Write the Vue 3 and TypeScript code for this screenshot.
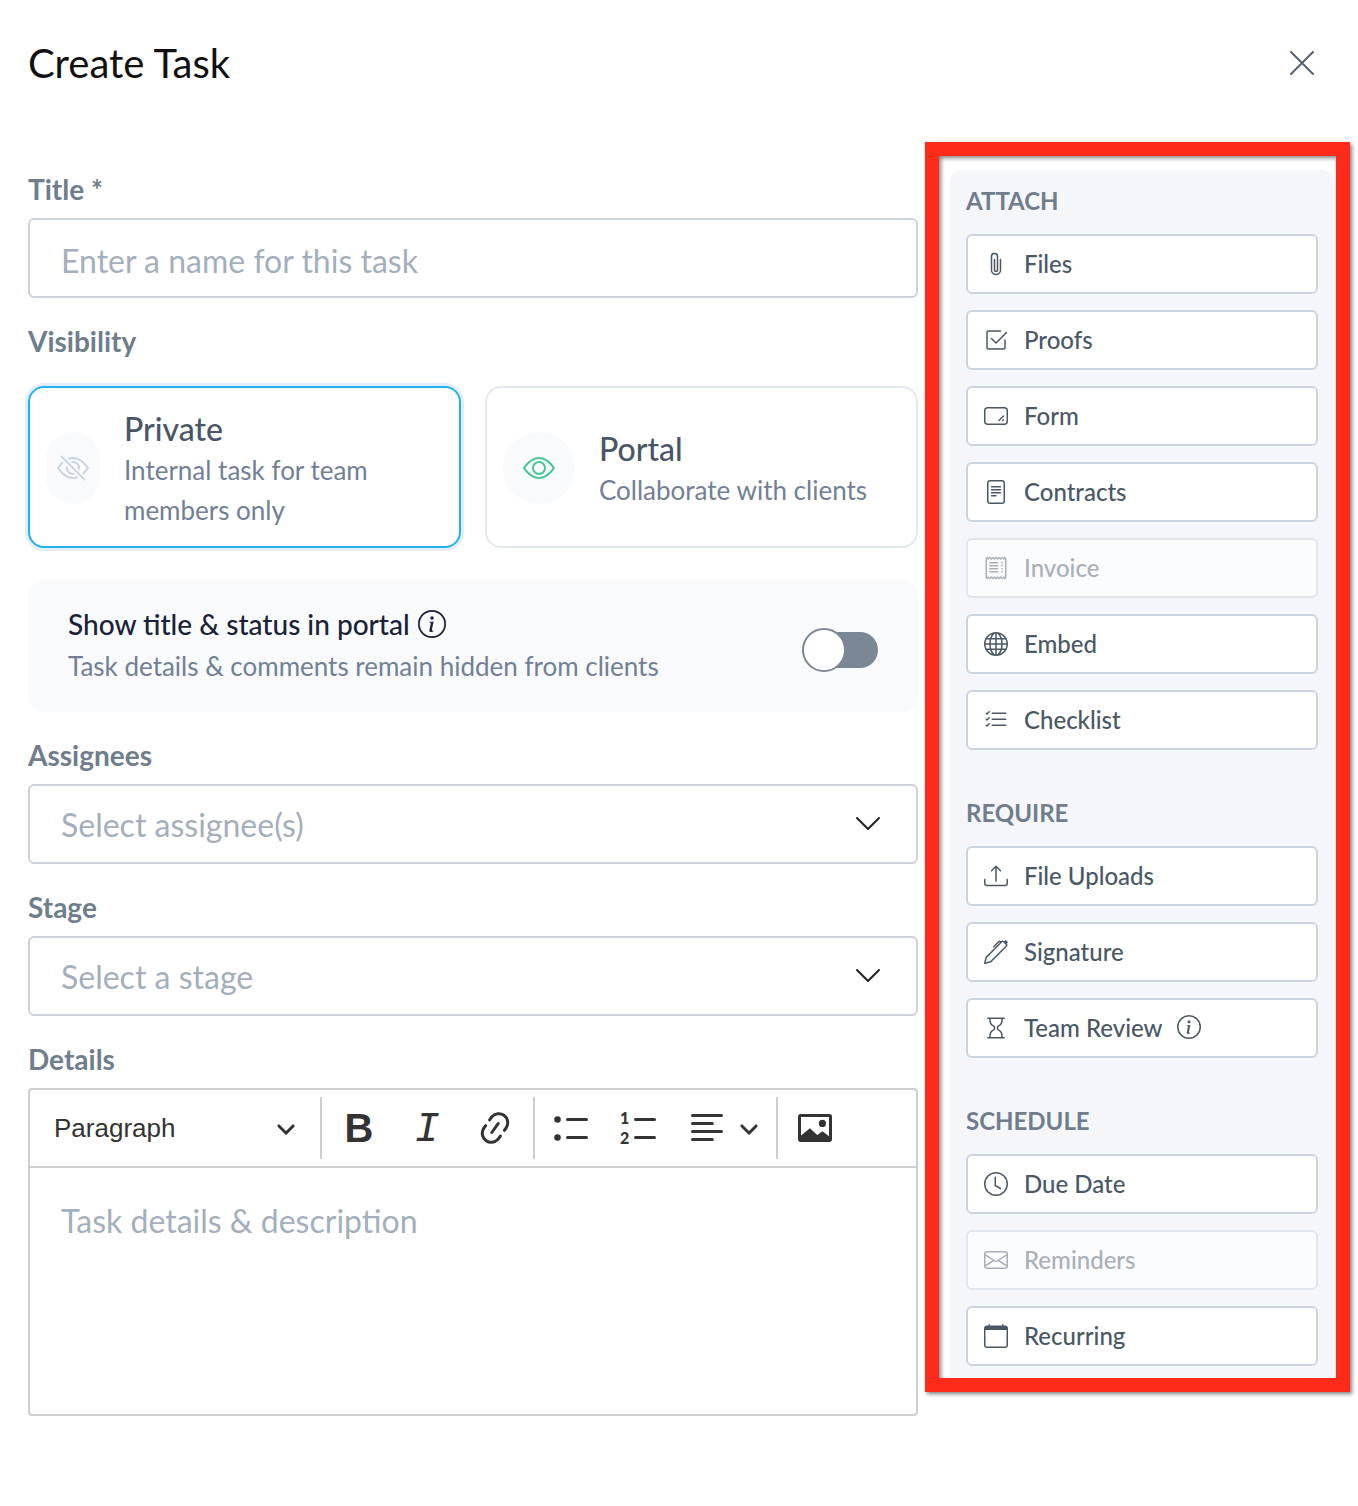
<script setup lang="ts">
import { ref } from 'vue'

interface Action {
  label: string
  icon: string
  disabled?: boolean
  info?: boolean
}

interface ActionGroup {
  heading: string
  actions: Action[]
}

const title = ref('')
const visibility = ref('private')
const showInPortal = ref(false)
const assignee = ref('')
const stage = ref('')
const blockStyle = ref('paragraph')
const details = ref('')

const circle = 'M8 15A7 7 0 1 1 8 1a7 7 0 0 1 0 14m0 1A8 8 0 1 0 8 0a8 8 0 0 0 0 16'

const icons: Record<string, string> = {
  paperclip:
    'M4.5 3a2.5 2.5 0 0 1 5 0v9a1.5 1.5 0 0 1-3 0V5a.5.5 0 0 1 1 0v7a.5.5 0 0 0 1 0V3a1.5 1.5 0 1 0-3 0v9a2.5 2.5 0 0 0 5 0V5a.5.5 0 0 1 1 0v7a3.5 3.5 0 1 1-7 0z',
  check:
    'M3 14.5A1.5 1.5 0 0 1 1.5 13V3A1.5 1.5 0 0 1 3 1.5h8a.5.5 0 0 1 0 1H3a.5.5 0 0 0-.5.5v10a.5.5 0 0 0 .5.5h10a.5.5 0 0 0 .5-.5V8a.5.5 0 0 1 1 0v5a1.5 1.5 0 0 1-1.5 1.5z M8.354 10.354l7-7a.5.5 0 0 0-.708-.708L8 9.293 5.354 6.646a.5.5 0 1 0-.708.708l3 3a.5.5 0 0 0 .708 0',
  form:
    'M0 4.5A2.5 2.5 0 0 1 2.5 2h11A2.5 2.5 0 0 1 16 4.5v7a2.5 2.5 0 0 1-2.5 2.5h-11A2.5 2.5 0 0 1 0 11.5zM2.5 3A1.5 1.5 0 0 0 1 4.5v7A1.5 1.5 0 0 0 2.5 13h11a1.5 1.5 0 0 0 1.5-1.5v-7A1.5 1.5 0 0 0 13.5 3zm10.854 4.646a.5.5 0 0 1 0 .708l-3 3a.5.5 0 0 1-.708-.708l3-3a.5.5 0 0 1 .708 0m0 2.5a.5.5 0 0 1 0 .708l-.5.5a.5.5 0 0 1-.708-.708l.5-.5a.5.5 0 0 1 .708 0',
  file:
    'M5 4a.5.5 0 0 0 0 1h6a.5.5 0 0 0 0-1zm-.5 2.5A.5.5 0 0 1 5 6h6a.5.5 0 0 1 0 1H5a.5.5 0 0 1-.5-.5M5 8a.5.5 0 0 0 0 1h6a.5.5 0 0 0 0-1zm0 2a.5.5 0 0 0 0 1h3a.5.5 0 0 0 0-1z M2 2a2 2 0 0 1 2-2h8a2 2 0 0 1 2 2v12a2 2 0 0 1-2 2H4a2 2 0 0 1-2-2zm10-1H4a1 1 0 0 0-1 1v12a1 1 0 0 0 1 1h8a1 1 0 0 0 1-1V2a1 1 0 0 0-1-1',
  receipt:
    'M1.92.506a.5.5 0 0 1 .434.14L3 1.293l.646-.647a.5.5 0 0 1 .708 0L5 1.293l.646-.647a.5.5 0 0 1 .708 0L7 1.293l.646-.647a.5.5 0 0 1 .708 0L9 1.293l.646-.647a.5.5 0 0 1 .708 0l.646.647.646-.647a.5.5 0 0 1 .708 0l.646.647.646-.647a.5.5 0 0 1 .801.13l.5 1A.5.5 0 0 1 15 2v12a.5.5 0 0 1-.053.224l-.5 1a.5.5 0 0 1-.8.13L13 14.707l-.646.647a.5.5 0 0 1-.708 0L11 14.707l-.646.647a.5.5 0 0 1-.708 0L9 14.707l-.646.647a.5.5 0 0 1-.708 0L7 14.707l-.646.647a.5.5 0 0 1-.708 0L5 14.707l-.646.647a.5.5 0 0 1-.708 0L3 14.707l-.646.647a.5.5 0 0 1-.801-.13l-.5-1A.5.5 0 0 1 1 14V2a.5.5 0 0 1 .053-.224l.5-1a.5.5 0 0 1 .367-.27m.217 1.338L2 2.118v11.764l.137.274.51-.51a.5.5 0 0 1 .707 0l.646.647.646-.646a.5.5 0 0 1 .708 0l.646.646.646-.646a.5.5 0 0 1 .708 0l.646.646.646-.646a.5.5 0 0 1 .708 0l.646.646.646-.646a.5.5 0 0 1 .708 0l.646.646.646-.646a.5.5 0 0 1 .708 0l.509.509.137-.274V2.118l-.137-.274-.51.51a.5.5 0 0 1-.707 0L12 1.707l-.646.647a.5.5 0 0 1-.708 0L10 1.707l-.646.647a.5.5 0 0 1-.708 0L8 1.707l-.646.647a.5.5 0 0 1-.708 0L6 1.707l-.646.647a.5.5 0 0 1-.708 0L4 1.707l-.646.647a.5.5 0 0 1-.708 0z M3.5 4h6v1h-6z M3.5 6h6v1h-6z M3.5 8h6v1h-6z M3.5 10h6v1h-6z M11.5 4h1v1h-1z M11.5 6h1v1h-1z M11.5 8h1v1h-1z M11.5 10h1v1h-1z',
  globe:
    'M0 8a8 8 0 1 1 16 0A8 8 0 0 1 0 8m7.5-6.923c-.67.204-1.335.82-1.887 1.855A8 8 0 0 0 5.145 4H7.5zM4.09 4a9.3 9.3 0 0 1 .64-1.539 7 7 0 0 1 .597-.933A7.03 7.03 0 0 0 2.255 4zm-.582 3.5c.03-.877.138-1.718.312-2.5H1.674a7 7 0 0 0-.656 2.5zM4.847 5a12.5 12.5 0 0 0-.338 2.5H7.5V5zM8.5 5v2.5h2.99a12.5 12.5 0 0 0-.337-2.5zM4.51 8.5a12.5 12.5 0 0 0 .337 2.5H7.5V8.5zm3.99 0V11h2.653c.187-.765.306-1.608.338-2.5zM5.145 12q.208.58.468 1.068c.552 1.035 1.218 1.65 1.887 1.855V12zm.182 2.472a7 7 0 0 1-.597-.933A9.3 9.3 0 0 1 4.09 12H2.255a7 7 0 0 0 3.072 2.472M3.82 11a13.7 13.7 0 0 1-.312-2.5h-2.49c.062.89.291 1.733.656 2.5zm6.853 3.472A7 7 0 0 0 13.745 12H11.91a9.3 9.3 0 0 1-.64 1.539 7 7 0 0 1-.597.933M8.5 12v2.923c.67-.204 1.335-.82 1.887-1.855q.26-.487.468-1.068zm3.68-1h2.146c.365-.767.594-1.61.656-2.5h-2.49a13.7 13.7 0 0 1-.312 2.5m2.802-3.5a7 7 0 0 0-.656-2.5H12.18c.174.782.282 1.623.312 2.5zM11.27 2.461c.247.464.462.98.64 1.539h1.835a7 7 0 0 0-3.072-2.472c.218.284.418.598.597.933M10.855 4a8 8 0 0 0-.468-1.068C9.835 1.897 9.17 1.282 8.5 1.077V4z',
  list:
    'M5 11.5a.5.5 0 0 1 .5-.5h9a.5.5 0 0 1 0 1h-9a.5.5 0 0 1-.5-.5m0-4a.5.5 0 0 1 .5-.5h9a.5.5 0 0 1 0 1h-9a.5.5 0 0 1-.5-.5m0-4a.5.5 0 0 1 .5-.5h9a.5.5 0 0 1 0 1h-9a.5.5 0 0 1-.5-.5M3.854 2.146a.5.5 0 0 1 0 .708l-1.5 1.5a.5.5 0 0 1-.708 0l-.5-.5a.5.5 0 1 1 .708-.708L2 3.293l1.146-1.147a.5.5 0 0 1 .708 0m0 4a.5.5 0 0 1 0 .708l-1.5 1.5a.5.5 0 0 1-.708 0l-.5-.5a.5.5 0 1 1 .708-.708L2 7.293l1.146-1.147a.5.5 0 0 1 .708 0m0 4a.5.5 0 0 1 0 .708l-1.5 1.5a.5.5 0 0 1-.708 0l-.5-.5a.5.5 0 0 1 .708-.708l.146.147 1.146-1.147a.5.5 0 0 1 .708 0',
  upload:
    'M.5 9.9a.5.5 0 0 1 .5.5v2.5a1 1 0 0 0 1 1h12a1 1 0 0 0 1-1v-2.5a.5.5 0 0 1 1 0v2.5a2 2 0 0 1-2 2H2a2 2 0 0 1-2-2v-2.5a.5.5 0 0 1 .5-.5 M7.646 1.146a.5.5 0 0 1 .708 0l3 3a.5.5 0 0 1-.708.708L8.5 2.707V11.5a.5.5 0 0 1-1 0V2.707L5.354 4.854a.5.5 0 1 1-.708-.708z',
  pen:
    'M13.498.795l.149-.149a1.207 1.207 0 1 1 1.707 1.708l-.149.148a1.5 1.5 0 0 1-.059 2.059L4.854 14.854a.5.5 0 0 1-.233.131l-4 1a.5.5 0 0 1-.606-.606l1-4a.5.5 0 0 1 .131-.232l9.642-9.642a.5.5 0 0 0-.642.056L6.854 4.854a.5.5 0 1 1-.708-.708L9.44.854A1.5 1.5 0 0 1 11.5.796a1.5 1.5 0 0 1 1.998-.001m-.644.766a.5.5 0 0 0-.707 0L1.95 11.756l-.764 3.057 3.057-.764L14.44 3.854a.5.5 0 0 0 0-.708z',
  hourglass:
    'M2 1.5a.5.5 0 0 1 .5-.5h11a.5.5 0 0 1 0 1h-1v1a4.5 4.5 0 0 1-2.557 4.06c-.29.139-.443.377-.443.59v.7c0 .213.154.451.443.59A4.5 4.5 0 0 1 12.5 13v1h1a.5.5 0 0 1 0 1h-11a.5.5 0 1 1 0-1h1v-1a4.5 4.5 0 0 1 2.557-4.06c.29-.139.443-.377.443-.59v-.7c0-.213-.154-.451-.443-.59A4.5 4.5 0 0 1 3.5 3V2h-1a.5.5 0 0 1-.5-.5m2.5.5v1a3.5 3.5 0 0 0 1.989 3.158c.533.256 1.011.791 1.011 1.491v.702c0 .7-.478 1.235-1.011 1.491A3.5 3.5 0 0 0 4.5 13v1h7v-1a3.5 3.5 0 0 0-1.989-3.158C8.978 9.586 8.5 9.052 8.5 8.351v-.702c0-.7.478-1.235 1.011-1.491A3.5 3.5 0 0 0 11.5 3V2z',
  info:
    circle +
    ' M8.93 6.588l-2.29.287-.082.38.45.083c.294.07.352.176.288.469l-.738 3.468c-.194.897.105 1.319.808 1.319.545 0 1.178-.252 1.465-.598l.088-.416c-.2.176-.492.246-.686.246-.275 0-.375-.193-.304-.533zM9 4.5a1 1 0 1 1-2 0 1 1 0 0 1 2 0',
  clock: circle + ' M8 3.5a.5.5 0 0 0-1 0V9a.5.5 0 0 0 .252.434l3.5 2a.5.5 0 0 0 .496-.868L8 8.71z',
  envelope:
    'M0 4a2 2 0 0 1 2-2h12a2 2 0 0 1 2 2v8a2 2 0 0 1-2 2H2a2 2 0 0 1-2-2zm2-1a1 1 0 0 0-1 1v.217l7 4.2 7-4.2V4a1 1 0 0 0-1-1zm13 2.383-4.708 2.825L15 11.105zm-.034 6.876-5.64-3.471L8 9.583l-1.326-.795-5.64 3.47A1 1 0 0 0 2 13h12a1 1 0 0 0 .966-.741M1 11.105l4.708-2.897L1 5.383z',
  calendar:
    'M3.5 0a.5.5 0 0 1 .5.5V1h8V.5a.5.5 0 0 1 1 0V1h1a2 2 0 0 1 2 2v11a2 2 0 0 1-2 2H2a2 2 0 0 1-2-2V3a2 2 0 0 1 2-2h1V.5a.5.5 0 0 1 .5-.5M1 4v10a1 1 0 0 0 1 1h12a1 1 0 0 0 1-1V4z',
  eye:
    'M16 8s-3-5.5-8-5.5S0 8 0 8s3 5.5 8 5.5S16 8 16 8M1.173 8a13 13 0 0 1 1.66-2.043C4.12 4.668 5.88 3.5 8 3.5s3.879 1.168 5.168 2.457A13 13 0 0 1 14.828 8q-.086.13-.195.288c-.335.48-.83 1.12-1.465 1.755C11.879 11.332 10.119 12.5 8 12.5s-3.879-1.168-5.168-2.457A13 13 0 0 1 1.172 8z M8 5.5a2.5 2.5 0 1 0 0 5 2.5 2.5 0 0 0 0-5M4.5 8a3.5 3.5 0 1 1 7 0 3.5 3.5 0 0 1-7 0',
  eyeSlash:
    'M13.359 11.238C15.06 9.72 16 8 16 8s-3-5.5-8-5.5a7 7 0 0 0-2.79.588l.77.771A6 6 0 0 1 8 3.5c2.12 0 3.879 1.168 5.168 2.457A13 13 0 0 1 14.828 8q-.086.13-.195.288c-.335.48-.83 1.12-1.465 1.755q-.247.248-.517.486z M11.297 9.176a3.5 3.5 0 0 0-4.474-4.474l.823.823a2.5 2.5 0 0 1 2.829 2.829zm-2.943 1.299.822.822a3.5 3.5 0 0 1-4.474-4.474l.823.823a2.5 2.5 0 0 0 2.829 2.829 M3.35 5.47q-.27.24-.518.487A13 13 0 0 0 1.172 8l.195.288c.335.48.83 1.12 1.465 1.755C4.121 11.332 5.881 12.5 8 12.5c.716 0 1.39-.133 2.02-.36l.77.772A7 7 0 0 1 8 13.5C3 13.5 0 8 0 8s.939-1.721 2.641-3.238l.708.709zm10.296 8.884-12-12 .708-.708 12 12z',
  link:
    'm11.077 15 .991-1.416a.75.75 0 1 1 1.229.86l-1.148 1.64a.748.748 0 0 1-.217.206 5.251 5.251 0 0 1-8.503-5.955.741.741 0 0 1 .12-.274l1.147-1.639a.75.75 0 1 1 1.228.86L4.933 10.7l.006.003a3.75 3.75 0 0 0 6.132 4.294l.006.004zm5.494-5.335a.748.748 0 0 1-.12.274l-1.147 1.639a.75.75 0 1 1-1.228-.86l.86-1.23a3.75 3.75 0 0 0-6.144-4.301l-.86 1.229a.75.75 0 0 1-1.229-.86l1.148-1.64a.748.748 0 0 1 .217-.206 5.251 5.251 0 0 1 8.503 5.955zm-4.563-2.532a.75.75 0 0 1 .184 1.045l-3.155 4.505a.75.75 0 1 1-1.229-.86l3.155-4.506a.75.75 0 0 1 1.045-.184z',
  caret:
    'M.941 4.523a.75.75 0 1 1 1.06-1.06l3.006 3.005 3.005-3.005a.75.75 0 1 1 1.06 1.06l-3.549 3.55a.75.75 0 0 1-1.168-.136z',
}

const groups: ActionGroup[] = [
  {
    heading: 'ATTACH',
    actions: [
      { label: 'Files', icon: 'paperclip' },
      { label: 'Proofs', icon: 'check' },
      { label: 'Form', icon: 'form' },
      { label: 'Contracts', icon: 'file' },
      { label: 'Invoice', icon: 'receipt', disabled: true },
      { label: 'Embed', icon: 'globe' },
      { label: 'Checklist', icon: 'list' },
    ],
  },
  {
    heading: 'REQUIRE',
    actions: [
      { label: 'File Uploads', icon: 'upload' },
      { label: 'Signature', icon: 'pen' },
      { label: 'Team Review', icon: 'hourglass', info: true },
    ],
  },
  {
    heading: 'SCHEDULE',
    actions: [
      { label: 'Due Date', icon: 'clock' },
      { label: 'Reminders', icon: 'envelope', disabled: true },
      { label: 'Recurring', icon: 'calendar' },
    ],
  },
]
</script>

<template>
  <div class="page">
    <header class="header">
      <h1>Create Task</h1>
      <button class="close" type="button" aria-label="Close">
        <svg width="24" height="24" viewBox="0 0 24 24" fill="none" stroke="currentColor" stroke-width="2" stroke-linecap="round">
          <path d="M1 1l22 22M23 1L1 23" />
        </svg>
      </button>
    </header>

    <div class="columns">
      <form class="form" @submit.prevent>
        <div class="group">
          <label class="label" for="title">Title *</label>
          <input id="title" v-model="title" class="field text" type="text" placeholder="Enter a name for this task" />
        </div>

        <div class="group visibility" role="radiogroup" aria-labelledby="visibility-label">
          <div id="visibility-label" class="label">Visibility</div>
          <div class="cards">
            <label class="card" :class="{ selected: visibility === 'private' }">
              <input v-model="visibility" class="radio" type="radio" name="visibility" value="private" />
              <span class="badge narrow">
                <svg width="32" height="32" viewBox="0 0 16 16" fill="currentColor"><path :d="icons.eyeSlash" /></svg>
              </span>
              <span class="card-text">
                <span class="card-title">Private</span>
                <span class="card-note">Internal task for team members only</span>
              </span>
            </label>
            <label class="card" :class="{ selected: visibility === 'portal' }">
              <input v-model="visibility" class="radio" type="radio" name="visibility" value="portal" />
              <span class="badge green">
                <svg width="32" height="32" viewBox="0 0 16 16" fill="currentColor"><path :d="icons.eye" /></svg>
              </span>
              <span class="card-text">
                <span class="card-title">Portal</span>
                <span class="card-note">Collaborate with clients</span>
              </span>
            </label>
          </div>
        </div>

        <div class="portal-row">
          <div class="portal-text">
            <label class="portal-title" for="portal-toggle">
              Show title &amp; status in portal
              <svg width="28" height="28" viewBox="0 0 16 16" fill="currentColor"><path :d="icons.info" /></svg>
            </label>
            <span class="card-note">Task details &amp; comments remain hidden from clients</span>
          </div>
          <input id="portal-toggle" v-model="showInPortal" class="toggle" type="checkbox" role="switch" />
        </div>

        <div class="group">
          <label class="label" for="assignees">Assignees</label>
          <div class="select-wrap">
            <select id="assignees" v-model="assignee" class="field select">
              <option value="">Select assignee(s)</option>
            </select>
            <svg class="chevron" width="26" height="16" viewBox="0 0 26 16" fill="none" stroke="currentColor" stroke-width="2" stroke-linecap="round" stroke-linejoin="round">
              <path d="M2 2l11 11L24 2" />
            </svg>
          </div>
        </div>

        <div class="group">
          <label class="label" for="stage">Stage</label>
          <div class="select-wrap">
            <select id="stage" v-model="stage" class="field select">
              <option value="">Select a stage</option>
            </select>
            <svg class="chevron" width="26" height="16" viewBox="0 0 26 16" fill="none" stroke="currentColor" stroke-width="2" stroke-linecap="round" stroke-linejoin="round">
              <path d="M2 2l11 11L24 2" />
            </svg>
          </div>
        </div>

        <div class="group">
          <label class="label" for="details">Details</label>
          <div class="editor">
            <div class="toolbar" role="toolbar" aria-label="Text formatting">
              <div class="style-wrap">
                <select v-model="blockStyle" class="style-select" aria-label="Block style">
                  <option value="paragraph">Paragraph</option>
                </select>
                <svg class="style-caret" width="20" height="20" viewBox="0 0 10 10" fill="currentColor"><path :d="icons.caret" /></svg>
              </div>
              <span class="sep"></span>
              <button class="tool bold" type="button" aria-label="Bold">B</button>
              <button class="tool italic" type="button" aria-label="Italic">I</button>
              <button class="tool" type="button" aria-label="Link">
                <svg width="40" height="40" viewBox="0 0 20 20" fill="currentColor"><path :d="icons.link" /></svg>
              </button>
              <span class="sep"></span>
              <button class="tool" type="button" aria-label="Bulleted list">
                <svg width="40" height="40" viewBox="0 0 20 20" fill="none" stroke="currentColor" stroke-width="1.5" stroke-linecap="round">
                  <path d="M7.75 5.75h9.5M7.75 14.75h9.5" />
                  <path d="M2.75 5.75h.01M2.75 14.75h.01" stroke-width="3.3" />
                </svg>
              </button>
              <button class="tool" type="button" aria-label="Numbered list">
                <svg width="40" height="40" viewBox="0 0 20 20">
                  <path d="M7.75 5.75h9.5M7.75 14.75h9.5" stroke="currentColor" stroke-width="1.5" stroke-linecap="round" />
                  <text class="numeral" x="0" y="8">1</text>
                  <text class="numeral" x="0" y="18">2</text>
                </svg>
              </button>
              <button class="tool align" type="button" aria-label="Text alignment">
                <svg width="40" height="40" viewBox="0 0 20 20" fill="none" stroke="currentColor" stroke-width="1.5" stroke-linecap="round">
                  <path d="M2.75 3.75h14.5M2.75 7.75h9.9M2.75 11.75h14.5M2.75 15.75h9.9" />
                </svg>
                <svg width="20" height="20" viewBox="0 0 10 10" fill="currentColor"><path :d="icons.caret" /></svg>
              </button>
              <span class="sep"></span>
              <button class="tool" type="button" aria-label="Insert image">
                <svg width="40" height="40" viewBox="0 0 20 20" fill="currentColor">
                  <rect x="2.25" y="3.75" width="15.5" height="12.5" rx=".6" fill="none" stroke="currentColor" stroke-width="1.5" />
                  <circle cx="13.7" cy="7.7" r="1.8" />
                  <path d="M2.500 16.500v-2.400L7.500 10.100l3.600 3.400 2.600-1.900L17.500 14.500v2z" />
                </svg>
              </button>
            </div>
            <textarea id="details" v-model="details" class="details" placeholder="Task details &amp; description"></textarea>
          </div>
        </div>
      </form>

      <aside class="frame">
        <div class="panel">
          <section v-for="group in groups" :key="group.heading" class="actions">
            <h2>{{ group.heading }}</h2>
            <button v-for="action in group.actions" :key="action.label" class="action" type="button" :disabled="action.disabled">
              <svg width="24" height="24" viewBox="0 0 16 16" fill="currentColor"><path :d="icons[action.icon]" /></svg>
              <span class="action-label">
                {{ action.label }}
                <svg v-if="action.info" width="24" height="24" viewBox="0 0 16 16" fill="currentColor"><path :d="icons.info" /></svg>
              </span>
            </button>
          </section>
        </div>
      </aside>
    </div>
  </div>
</template>

<style>
body {
  margin: 0;
  background: #fff;
}
</style>

<style scoped>
*,
*::before,
*::after {
  box-sizing: border-box;
}

.page {
  padding: 39px 8px 90px 28px;
  font-family: Lato, "Liberation Sans", sans-serif;
  color: #111;
}

button,
input,
select,
textarea {
  margin: 0;
  font-family: inherit;
}

svg {
  display: block;
  flex: none;
}

.header {
  display: flex;
  align-items: center;
  justify-content: space-between;
  height: 48px;
  padding-right: 26px;
  margin-bottom: 55px;
}

h1 {
  margin: 0;
  font-size: 40px;
  line-height: 48px;
  font-weight: 400;
}

.close {
  padding: 10px;
  border: 0;
  background: none;
  color: #56636f;
  cursor: pointer;
}

.columns {
  display: flex;
  align-items: flex-start;
  gap: 7px;
}

.form {
  display: flex;
  flex: 1;
  flex-direction: column;
  gap: 28px;
  min-width: 0;
  padding-top: 32px;
}

.group {
  display: flex;
  flex-direction: column;
  gap: 14px;
}

.visibility {
  gap: 30px;
}

.label {
  font-size: 28px;
  line-height: 30px;
  font-weight: 700;
  color: #6f7d8c;
}

.field {
  width: 100%;
  height: 80px;
  padding: 0 31px;
  border: 2px solid #cbd2dc;
  border-radius: 6px;
  background: #fff;
  font-size: 32px;
  color: #3c4855;
}

.field.text {
  padding-top: 4px;
}

.field::placeholder,
.details::placeholder {
  color: #a3afbc;
  opacity: 1;
}

.select-wrap,
.style-wrap {
  display: grid;
  align-items: center;
}

.select-wrap > *,
.style-wrap > * {
  grid-area: 1 / 1;
}

.select {
  appearance: none;
  color: #a3afbc;
}

.chevron {
  justify-self: end;
  margin-right: 37px;
  color: #222;
  pointer-events: none;
}

.cards {
  display: grid;
  grid-template-columns: 1fr 1fr;
  gap: 24px;
}

.card {
  display: flex;
  align-items: center;
  gap: 24px;
  height: 162px;
  padding: 2px 16px 0;
  border: 2px solid #e2e8f0;
  border-radius: 16px;
  cursor: pointer;
}

.card.selected {
  border-color: #1fb2ec;
  box-shadow: 0 0 0 3px #e3edfd;
}

.radio {
  position: absolute;
  opacity: 0;
  pointer-events: none;
}

.badge {
  display: flex;
  flex: none;
  align-items: center;
  justify-content: center;
  width: 72px;
  height: 72px;
  border-radius: 36px;
  background: #f8fafc;
  color: #cbd5e0;
}

.badge.narrow {
  width: 54px;
}

.badge.green {
  color: #48c596;
}

.card-text,
.portal-text {
  display: flex;
  flex: 1;
  flex-direction: column;
}

.card-text {
  padding-top: 2px;
}

.card-title {
  font-size: 32px;
  line-height: 42px;
  font-weight: 500;
  color: #4a5568;
}

.card-note {
  font-size: 26px;
  line-height: 40px;
  color: #718096;
}

.portal-row {
  display: flex;
  align-items: center;
  height: 132px;
  padding: 8px 40px 0;
  margin-top: 4px;
  border-radius: 16px;
  background: #f8fafc;
}

.portal-text {
  padding-bottom: 12px;
}

.portal-title {
  display: flex;
  align-items: center;
  gap: 8px;
  font-size: 28px;
  line-height: 44px;
  font-weight: 500;
  color: #1a2238;
}

.toggle {
  display: grid;
  align-items: center;
  width: 76px;
  height: 44px;
  appearance: none;
  cursor: pointer;
}

.toggle::before,
.toggle::after {
  grid-area: 1 / 1;
  content: "";
}

.toggle::before {
  height: 36px;
  margin-left: 4px;
  border-radius: 18px;
  background: #7b8794;
}

.toggle::after {
  width: 44px;
  height: 44px;
  border: 2px solid #7b8794;
  border-radius: 50%;
  background: #fff;
}

.toggle:checked::after {
  justify-self: end;
}

.editor {
  display: flex;
  flex-direction: column;
  border: 2px solid #ccced1;
  border-radius: 4px;
}

.toolbar {
  display: flex;
  align-items: center;
  gap: 4px;
  height: 78px;
  padding: 0 8px;
  border-bottom: 2px solid #ccced1;
  color: #333;
}

.style-select {
  width: 276px;
  height: 60px;
  padding: 0 16px;
  border: 0;
  background: none;
  appearance: none;
  font-family: "Liberation Sans", Arial, sans-serif;
  font-size: 26px;
  color: #333;
}

.style-caret {
  justify-self: end;
  margin-right: 18px;
  pointer-events: none;
}

.sep {
  width: 2px;
  height: 62px;
  margin: 0 1px 0 2px;
  background: #ccced1;
}

.tool {
  display: flex;
  align-items: center;
  justify-content: center;
  width: 64px;
  height: 60px;
  padding: 0;
  border: 0;
  background: none;
  color: #333;
  cursor: pointer;
}

.tool.align {
  gap: 12px;
  width: 94px;
}

.tool.bold {
  font-family: "Liberation Sans", Arial, sans-serif;
  font-size: 40px;
  font-weight: 700;
}

.tool.italic {
  padding-top: 4px;
  font-family: "Liberation Mono", monospace;
  font-size: 42px;
  font-style: italic;
}

.numeral {
  font-family: Lato, sans-serif;
  font-size: 8px;
  font-weight: 900;
  fill: currentColor;
}

.details {
  display: block;
  width: 100%;
  height: 246px;
  padding: 32px 31px;
  border: 0;
  background: none;
  font-size: 32px;
  line-height: 42px;
  resize: none;
}

.frame {
  width: 425px;
  padding: 14px 2px 0 11px;
  border: 14px solid #ff2b1a;
  box-shadow:
    2px 2px 4px rgba(0, 0, 0, 0.5),
    inset 2px 2px 4px rgba(0, 0, 0, 0.5);
}

.panel {
  display: flex;
  flex-direction: column;
  gap: 48px;
  padding: 16px 16px 12px;
  border-radius: 12px 12px 0 0;
  background: #f4f6fa;
}

.actions {
  display: flex;
  flex-direction: column;
  gap: 16px;
}

h2 {
  margin: 0 0 2px;
  font-size: 24px;
  line-height: 30px;
  font-weight: 700;
  color: #6f7d8c;
}

.action {
  display: flex;
  align-items: center;
  gap: 16px;
  height: 60px;
  padding: 0 16px;
  border: 2px solid #cbd5e0;
  border-radius: 6px;
  background: #fff;
  font-size: 24px;
  font-weight: 500;
  color: #4a5866;
  cursor: pointer;
}

.action-label {
  display: flex;
  align-items: center;
  gap: 14px;
  padding-bottom: 2px;
}

.action:disabled {
  border-color: #e0e6ed;
  background: #fafcfe;
  color: #a9b0b9;
  cursor: default;
}
</style>
